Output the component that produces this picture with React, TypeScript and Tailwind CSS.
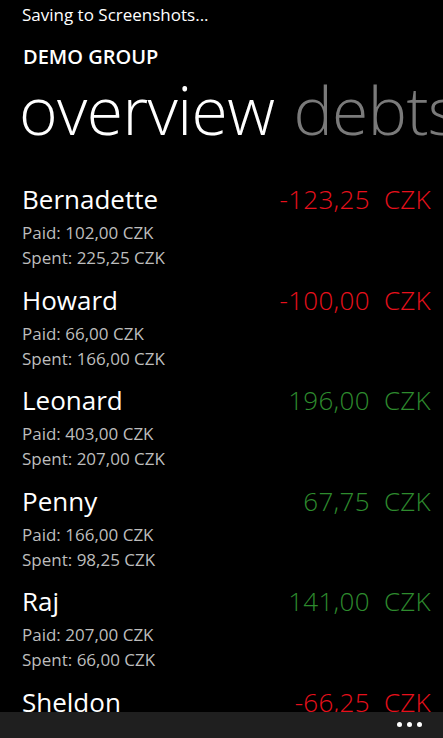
import React from 'react'

type Person = {
  name: string
  paid?: string
  spent?: string
  balance: string
  positive: boolean
}

const people: Person[] = [
  { name: 'Bernadette', paid: '102,00', spent: '225,25', balance: '-123,25', positive: false },
  { name: 'Howard', paid: '66,00', spent: '166,00', balance: '-100,00', positive: false },
  { name: 'Leonard', paid: '403,00', spent: '207,00', balance: '196,00', positive: true },
  { name: 'Penny', paid: '166,00', spent: '98,25', balance: '67,75', positive: true },
  { name: 'Raj', paid: '207,00', spent: '66,00', balance: '141,00', positive: true },
  // last row sits under the app bar, only its first line peeks out
  { name: 'Sheldon', balance: '-66,25', positive: false },
]

function PersonRow({ p }: { p: Person }) {
  return (
    <div className="flex h-[100.5px] shrink-0 items-start justify-between pl-[22px] pr-[12px]">
      <div className="flex flex-col">
        <div className="h-[32px] text-[26px] leading-[32px] text-white">{p.name}</div>
        {p.paid && (
          <div className="mt-[5px] h-[25px] text-[17px] leading-[25px] text-[#bdbdbd]">Paid: {p.paid} CZK</div>
        )}
        {p.spent && (
          <div className="h-[25px] text-[17px] leading-[25px] text-[#bdbdbd]">Spent: {p.spent} CZK</div>
        )}
      </div>
      <div
        className={
          p.positive
            ? 'h-[32px] text-[26px] font-light leading-[32px] tracking-[0.3px] text-[#2e8b2e]'
            : 'h-[32px] text-[26px] font-light leading-[32px] tracking-[0.3px] text-[#e8101c]'
        }
      >
        {p.balance}&nbsp; CZK
      </div>
    </div>
  )
}

export default function App() {
  return (
    <div
      className="relative flex h-[738px] w-[443px] flex-col overflow-hidden bg-black"
      style={{ fontFamily: '"Open Sans", "Noto Sans", sans-serif' }}
    >
      {/* System tray message */}
      <div className="h-[30px] pl-[22px] pt-[3px] text-[17px] leading-[24px] text-white">Saving to Screenshots...</div>

      {/* Pivot header */}
      <div className="mt-[18px] pl-[23px] text-[20px] font-semibold leading-[24px] text-white">DEMO GROUP</div>
      <div className="mt-[5px] flex whitespace-nowrap pl-[19px] text-[66px] font-light leading-[70px] tracking-[-0.6px]">
        <span className="text-white">overview</span>
        <span className="ml-[19px] text-[#7a7a7a]">debts</span>
      </div>

      {/* List */}
      <div className="mt-[39px] flex flex-col">
        {people.map((p) => (
          <PersonRow key={p.name} p={p} />
        ))}
      </div>

      {/* App bar */}
      <div className="absolute bottom-0 left-0 right-0 flex h-[26px] items-start justify-end bg-[#1f1f1f] pr-[21px] pt-[10px]">
        <div className="flex gap-[5px]">
          <span className="h-[5px] w-[5px] rounded-full bg-white" />
          <span className="h-[5px] w-[5px] rounded-full bg-white" />
          <span className="h-[5px] w-[5px] rounded-full bg-white" />
        </div>
      </div>
    </div>
  )
}
